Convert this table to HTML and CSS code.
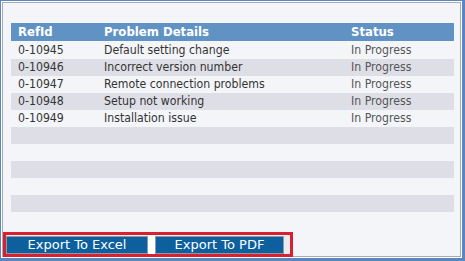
FILE: index.html
```html
<!DOCTYPE html>
<html lang="en">
<head>
  <meta charset="UTF-8" />
  <title>Problem Tickets</title>
  <link rel="stylesheet" href="styles.css">
</head>
<body>
  <div class="window">
    <div class="panel">
      <table class="grid">
        <thead>
          <tr>
            <th class="col-id">RefId</th>
            <th class="col-detail">Problem Details</th>
            <th class="col-status">Status</th>
          </tr>
        </thead>
        <tbody>
          <tr><td>0-10945</td><td>Default setting change</td><td>In Progress</td></tr>
          <tr class="alt"><td>0-10946</td><td>Incorrect version number</td><td>In Progress</td></tr>
          <tr><td>0-10947</td><td>Remote connection problems</td><td>In Progress</td></tr>
          <tr class="alt"><td>0-10948</td><td>Setup not working</td><td>In Progress</td></tr>
          <tr><td>0-10949</td><td>Installation issue</td><td>In Progress</td></tr>
          <tr class="alt empty"><td></td><td></td><td></td></tr>
          <tr class="empty"><td></td><td></td><td></td></tr>
          <tr class="alt empty"><td></td><td></td><td></td></tr>
          <tr class="empty"><td></td><td></td><td></td></tr>
          <tr class="alt empty"><td></td><td></td><td></td></tr>
        </tbody>
      </table>

      <div class="toolbar">
        <button class="export excel">Export To Excel</button>
        <span class="sep"></span>
        <button class="export pdf">Export To PDF</button>
      </div>
    </div>
  </div>
</body>
</html>
```

FILE: styles.css
```css
:root {
  --frame-blue: #5b87c0;
  --head-blue: #6192c4;
  --row-gray: #dedfe6;
  --bg-panel: #f3f5f9;
  --btn-blue: #0d5f9e;
  --mark-red: #d9202e;
  --text: #333;
}

* {
  box-sizing: border-box;
}

body {
  margin: 0;
  font-family: "DejaVu Sans", Verdana, sans-serif;
  background: #fff;
}

.window {
  width: 465px;
  height: 261px;
  border: solid var(--frame-blue);
  border-width: 1px 3px 3px 1px;
  padding: 1px;
  background: #fff;
}

.panel {
  height: 100%;
  border: 1px solid #a9abb0;
  background: var(--bg-panel);
  display: flex;
  flex-direction: column;
}

.grid {
  margin: 20px 0 0 8px;
  width: 443px;
  border-collapse: collapse;
  font-family: "DejaVu Sans Condensed", "DejaVu Sans", sans-serif;
  font-size: 12.2px;
  color: var(--text);
}

.grid th {
  background: var(--head-blue);
  color: #fff;
  font-weight: bold;
  text-align: left;
  height: 18px;
  padding: 0 0 0 7px;
  font-size: 13px;
  line-height: 18px;
}

.grid td {
  height: 17px;
  padding: 0 0 0 7px;
  line-height: 17px;
  white-space: nowrap;
}

.grid tbody tr:first-child td {
  height: 18px;
}

.grid td:last-child {
  color: #555;
}

.grid tr.alt td {
  background: var(--row-gray);
}

.col-id { width: 86px; }
.col-detail { width: 247px; }

.toolbar {
  margin-top: auto;
  margin-bottom: -1px;
  width: 290px;
  height: 25px;
  border: 3px solid var(--mark-red);
  display: flex;
  align-items: center;
  background: #e9ebef;
}

.export {
  height: 18px;
  margin: 0;
  padding: 0;
  border: 1px solid #8e9aa6;
  background: var(--btn-blue);
  color: #fff;
  font-family: "DejaVu Sans", Verdana, sans-serif;
  font-size: 13px;
  line-height: 16px;
}

.excel { width: 142px; }

.sep {
  width: 7px;
  height: 100%;
  background: #fff;
}

.pdf { width: 129px; }
```
